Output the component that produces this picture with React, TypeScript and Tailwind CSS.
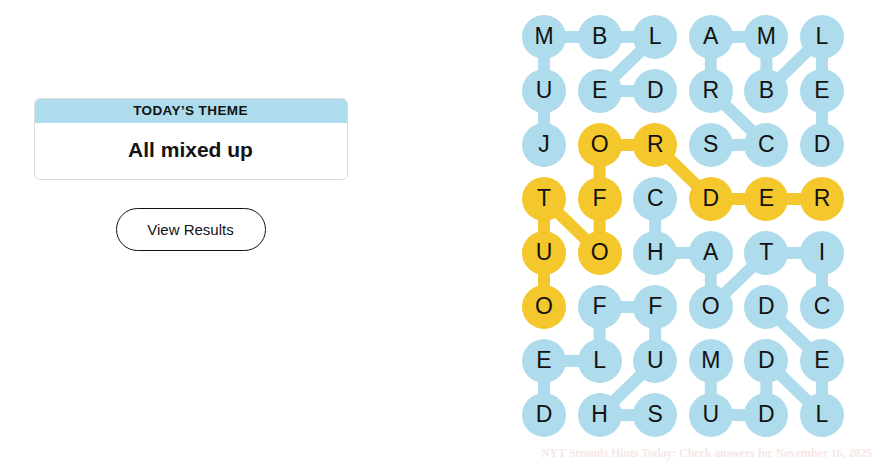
import React from 'react';

const BLUE = '#aedcec';
const YELLOW = '#f4c82c';

const letters = [
  'MBLAML',
  'UEDRBE',
  'JORSCD',
  'TFCDER',
  'UOHATI',
  'OFFODC',
  'ELUMDE',
  'DHSUDL',
];

const spangram = new Set(['2,1', '2,2', '3,3', '3,4', '3,5', '3,1', '4,1', '3,0', '4,0', '5,0']);

// pairs of [row, col]
const links: [number, number, number, number][] = [
  [0, 0, 0, 1], [0, 1, 0, 2], [0, 2, 1, 1], [1, 1, 1, 2], [0, 0, 1, 0], [1, 0, 2, 0],
  [0, 3, 0, 4], [0, 3, 1, 3], [1, 3, 2, 4], [2, 3, 2, 4],
  [0, 4, 1, 4], [1, 4, 0, 5], [0, 5, 1, 5], [1, 5, 2, 5],
  [2, 1, 2, 2], [2, 2, 3, 3], [3, 3, 3, 4], [3, 4, 3, 5],
  [2, 1, 3, 1], [3, 1, 4, 1], [4, 1, 3, 0], [3, 0, 4, 0], [4, 0, 5, 0],
  [3, 2, 4, 2], [4, 2, 4, 3], [4, 3, 5, 3], [5, 3, 4, 4], [4, 4, 4, 5], [4, 5, 5, 5],
  [5, 1, 5, 2], [5, 1, 6, 1], [6, 0, 6, 1], [6, 0, 7, 0],
  [5, 2, 6, 2], [6, 2, 7, 1], [7, 1, 7, 2],
  [5, 4, 6, 5], [6, 5, 7, 5],
  [6, 3, 7, 3], [7, 3, 7, 4], [7, 4, 6, 4], [6, 4, 7, 5],
];

const cx = (c: number) => 22 + c * 55.6;
const cy = (r: number) => 22 + r * 54;

const Board = () => (
  <div className="relative h-[422px] w-[322px]">
    <svg className="absolute inset-0" width="322" height="422">
      {links.map(([r1, c1, r2, c2], i) => {
        const yellow = spangram.has(`${r1},${c1}`) && spangram.has(`${r2},${c2}`);
        return (
          <line
            key={i}
            x1={cx(c1)}
            y1={cy(r1)}
            x2={cx(c2)}
            y2={cy(r2)}
            stroke={yellow ? YELLOW : BLUE}
            strokeWidth="12"
          />
        );
      })}
    </svg>
    <div className="relative grid grid-cols-[repeat(6,44px)] gap-x-[11.6px] gap-y-[10px]">
      {letters.map((row, r) =>
        row.split('').map((ch, c) => (
          <div
            key={`${r}-${c}`}
            className={`flex h-[44px] w-[44px] items-center justify-center rounded-full text-[23px] text-[#121212] ${
              spangram.has(`${r},${c}`) ? 'bg-[#f4c82c]' : 'bg-[#aedcec]'
            }`}
          >
            {ch}
          </div>
        ))
      )}
    </div>
  </div>
);

export default function App() {
  return (
    <div className="relative flex h-[461px] w-[882px] overflow-hidden bg-white font-['Liberation_Sans',Arial,sans-serif] text-[#121212]">
      <section className="flex w-[381px] flex-col items-center pt-[98px]">
        <div className="w-[314px] overflow-hidden rounded-md border border-[#dcdcdc]">
          <div className="flex h-[24px] items-center justify-center bg-[#aedcec] text-[13.5px] font-bold tracking-[0.4px]">
            TODAY’S THEME
          </div>
          <div className="flex h-[56px] items-center justify-center pb-[3px] text-[21px] font-bold">All mixed up</div>
        </div>
        <button className="mt-[28px] flex h-[43px] w-[150px] items-center justify-center rounded-full border border-[#121212] pt-[2px] text-[15px]">
          View Results
        </button>
      </section>
      <section className="ml-[141px] pt-[14.5px]">
        <Board />
      </section>
      <p className="absolute left-[541px] top-[447px] whitespace-nowrap font-['Liberation_Serif',serif] text-[11.8px] leading-[13px] font-bold text-[#f8e6e6]">
        NYT Strands Hints Today: Check answers for November 16, 2025
      </p>
    </div>
  );
}
